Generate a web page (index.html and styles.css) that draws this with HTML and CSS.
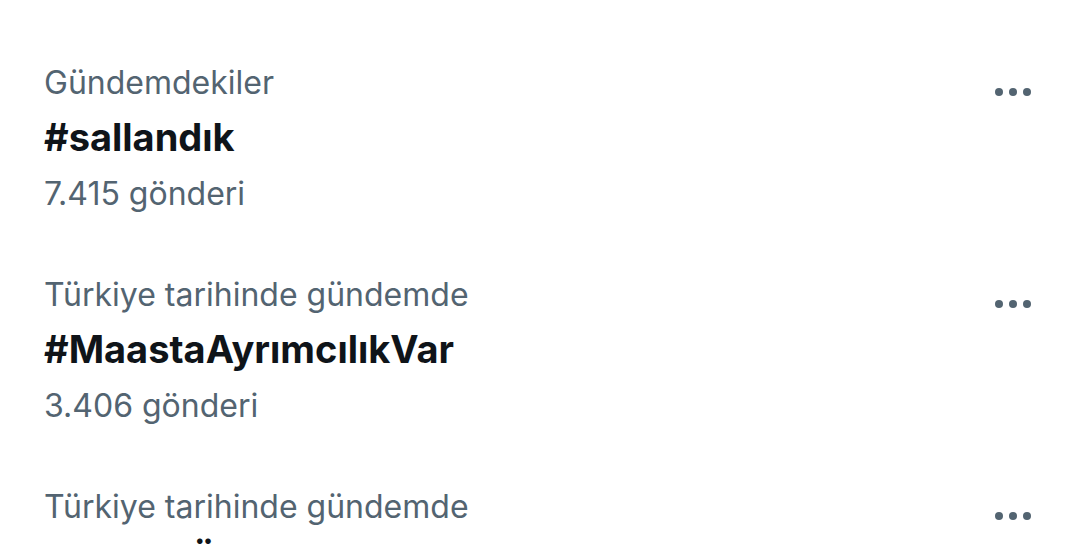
FILE: index.html
```html
<!DOCTYPE html>
<html lang="tr">
<head>
  <meta charset="UTF-8" />
  <title>Gündem</title>
  <meta name="viewport" content="width=device-width, initial-scale=1">
  <link rel="stylesheet" href="styles.css">
</head>
<body>
  <div class="trends">
    <div class="trend">
      <div class="info">
        <div class="meta">Gündemdekiler</div>
        <div class="tag">#sallandık</div>
        <div class="count">7.415 gönderi</div>
      </div>
      <button class="more" aria-label="Diğer">
        <svg viewBox="0 0 24 24"><circle cx="5" cy="12" r="2"/><circle cx="12" cy="12" r="2"/><circle cx="19" cy="12" r="2"/></svg>
      </button>
    </div>
    <div class="trend">
      <div class="info">
        <div class="meta">Türkiye tarihinde gündemde</div>
        <div class="tag">#MaastaAyrımcılıkVar</div>
        <div class="count">3.406 gönderi</div>
      </div>
      <button class="more" aria-label="Diğer">
        <svg viewBox="0 0 24 24"><circle cx="5" cy="12" r="2"/><circle cx="12" cy="12" r="2"/><circle cx="19" cy="12" r="2"/></svg>
      </button>
    </div>
    <div class="trend">
      <div class="info">
        <div class="meta">Türkiye tarihinde gündemde</div>
        <div class="tag">#AsgariÜcret</div>
        <div class="count">2.118 gönderi</div>
      </div>
      <button class="more" aria-label="Diğer">
        <svg viewBox="0 0 24 24"><circle cx="5" cy="12" r="2"/><circle cx="12" cy="12" r="2"/><circle cx="19" cy="12" r="2"/></svg>
      </button>
    </div>
  </div>
</body>
</html>
```

FILE: styles.css
```css
body { margin: 0; background: #fff; font-family: Inter, "Noto Sans", sans-serif; overflow: hidden; }
.trends { display: flex; flex-direction: column; padding-top: 6px; }
.trend { display: flex; justify-content: space-between; align-items: flex-start; padding: 56px 43px 0 44px; }
.info { display: flex; flex-direction: column; }
.meta { font-size: 32px; line-height: 42px; color: #536471; }
.tag { font-size: 38px; line-height: 66px; font-weight: 700; color: #0f1419; }
.count { font-size: 32px; line-height: 48px; color: #536471; }
.more { background: none; border: none; padding: 0; margin-top: 13px; width: 48px; height: 34px; cursor: pointer; }
.more svg { width: 48px; height: 48px; fill: #536471; margin-top: -7px; }
```
